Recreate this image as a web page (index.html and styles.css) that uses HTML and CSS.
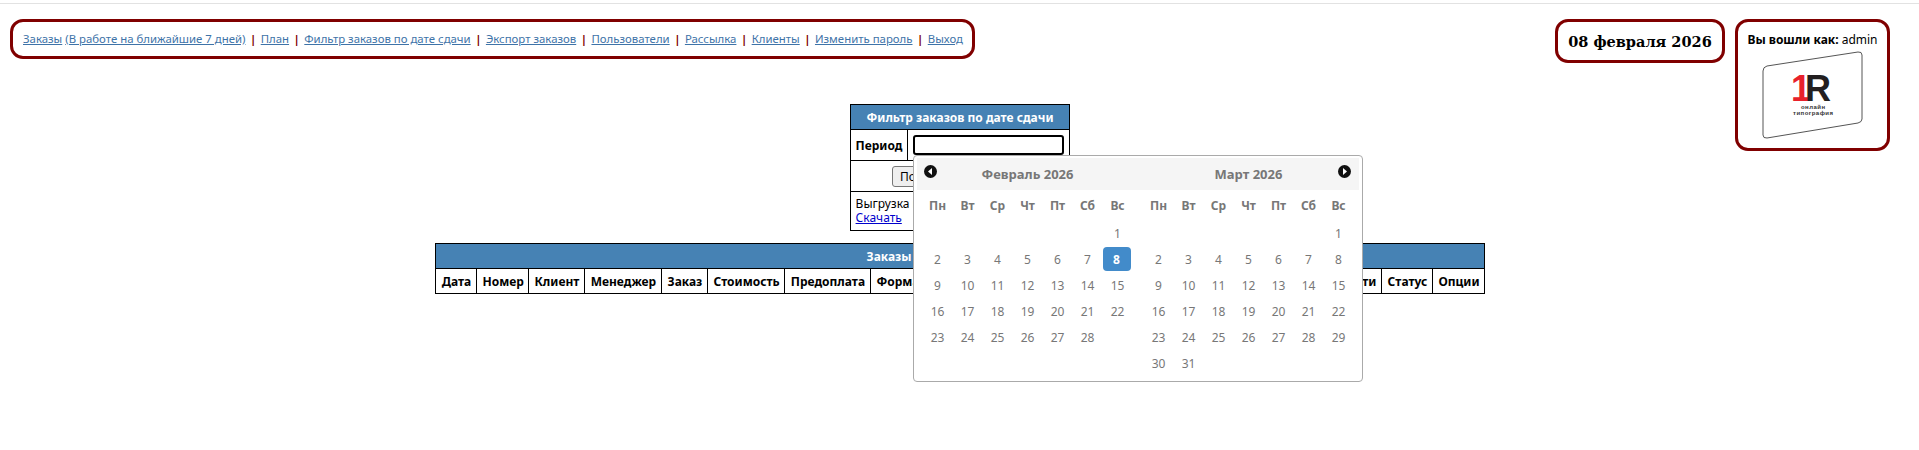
FILE: index.html
```html
<html>

<head>
  <title>Фильтр заказов по дате сдачи</title>
  <link rel="stylesheet" href="styles.css">
</head>

<body>
  <header class="top-bar">
    <nav class="main-menu">
      <a href="#">Заказы</a> <a href="#">(В работе на ближайшие 7 дней)</a>
      <span class="sep">|</span> <a href="#">План</a>
      <span class="sep">|</span> <a href="#">Фильтр заказов по дате сдачи</a>
      <span class="sep">|</span> <a href="#">Экспорт заказов</a>
      <span class="sep">|</span> <a href="#">Пользователи</a>
      <span class="sep">|</span> <a href="#">Рассылка</a>
      <span class="sep">|</span> <a href="#">Клиенты</a>
      <span class="sep">|</span> <a href="#">Изменить пароль</a>
      <span class="sep">|</span> <a href="#">Выход</a>
    </nav>
    <div class="today">08 февраля 2026</div>
    <div class="login-box">
      <div class="login-name"><b>Вы вошли как:</b> admin</div>
      <svg class="logo" width="102" height="90" viewBox="0 0 102 90">
        <path d="M1 20 Q1 16 5 15 L96 1 Q100 0.500 100 4 L100 68 Q100 71 96 72 L5 87 Q1 87.500 1 84 Z" fill="#fff" stroke="#555" stroke-width="1" />
        <text class="logo-one" x="29" y="50">1</text>
        <text class="logo-r" x="43" y="50">R</text>
        <text class="logo-small" x="51" y="58" textLength="24">онлайн</text>
        <text class="logo-small" x="51" y="64" textLength="40">типография</text>
      </svg>
    </div>
  </header>

  <main class="content">
    <table class="grid filter-table">
      <tr>
        <th colspan="2" class="grid-title">Фильтр заказов по дате сдачи</th>
      </tr>
      <tr class="period-row">
        <td class="period-label"><b>Период</b></td>
        <td><input type="text" class="period-input" /></td>
      </tr>
      <tr class="button-row">
        <td colspan="2"><button class="show-button">Показать заказы</button></td>
      </tr>
      <tr class="export-row">
        <td colspan="2">Выгрузка по фильтру<br><a href="#" class="download">Скачать</a></td>
      </tr>
    </table>

    <table class="grid orders-table">
      <colgroup>
        <col class="col-41">
        <col class="col-52">
        <col class="col-56">
        <col class="col-77">
        <col class="col-46">
        <col class="col-77">
        <col class="col-86">
        <col class="col-90">
        <col class="col-90">
        <col class="col-331">
        <col class="col-51">
        <col class="col-51">
      </colgroup>
      <tr>
        <th colspan="12" class="grid-title">Заказы за выбранный период</th>
      </tr>
      <tr class="orders-head">
        <th>Дата</th>
        <th>Номер</th>
        <th>Клиент</th>
        <th>Менеджер</th>
        <th>Заказ</th>
        <th>Стоимость</th>
        <th>Предоплата</th>
        <th class="form-col">Форма</th>
        <th>Дата сдачи</th>
        <th class="details-col">Подробности</th>
        <th>Статус</th>
        <th>Опции</th>
      </tr>
    </table>
  </main>

  <div class="datepicker">
    <div class="month">
      <div class="month-title">
        <svg class="month-arrow prev" width="13" height="13" viewBox="0 0 13 13">
          <circle cx="6.500" cy="6.500" r="6.500" fill="#111" />
          <path d="M8 3 L4 6.500 L8 10 Z" fill="#fff" />
        </svg>
        Февраль 2026
      </div>
      <div class="days">
        <b>Пн</b><b>Вт</b><b>Ср</b><b>Чт</b><b>Пт</b><b>Сб</b><b>Вс</b>
        <i></i><i></i><i></i><i></i><i></i><i></i><span>1</span>
        <span>2</span><span>3</span><span>4</span><span>5</span><span>6</span><span>7</span><span class="selected">8</span>
        <span>9</span><span>10</span><span>11</span><span>12</span><span>13</span><span>14</span><span>15</span>
        <span>16</span><span>17</span><span>18</span><span>19</span><span>20</span><span>21</span><span>22</span>
        <span>23</span><span>24</span><span>25</span><span>26</span><span>27</span><span>28</span><i></i>
      </div>
    </div>
    <div class="month">
      <div class="month-title">
        Март 2026
        <svg class="month-arrow next" width="13" height="13" viewBox="0 0 13 13">
          <circle cx="6.500" cy="6.500" r="6.500" fill="#111" />
          <path d="M5 3 L9 6.500 L5 10 Z" fill="#fff" />
        </svg>
      </div>
      <div class="days">
        <b>Пн</b><b>Вт</b><b>Ср</b><b>Чт</b><b>Пт</b><b>Сб</b><b>Вс</b>
        <i></i><i></i><i></i><i></i><i></i><i></i><span>1</span>
        <span>2</span><span>3</span><span>4</span><span>5</span><span>6</span><span>7</span><span>8</span>
        <span>9</span><span>10</span><span>11</span><span>12</span><span>13</span><span>14</span><span>15</span>
        <span>16</span><span>17</span><span>18</span><span>19</span><span>20</span><span>21</span><span>22</span>
        <span>23</span><span>24</span><span>25</span><span>26</span><span>27</span><span>28</span><span>29</span>
        <span>30</span><span>31</span>
      </div>
    </div>
  </div>
</body>

</html>
```

FILE: styles.css
```css
:root {
  --frame: #800000;
  --title: #4682b4;
  --link: #3e73a8;
  --muted: #777;
}

body {
  margin: 0;
  border-top: 1px solid #e2e2e2;
  margin-top: 3px;
  background-color: #fff;
  color: #000;
  font-family: "Noto Sans", Tahoma, sans-serif;
  font-size: 12px;
}

table {
  font-size: 12px;
}

.top-bar {
  display: flex;
  align-items: flex-start;
  padding: 15px 29px 0 10px;
}

.main-menu {
  border: 3px solid var(--frame);
  border-radius: 13px;
  box-sizing: border-box;
  height: 40px;
  line-height: 34px;
  padding: 0 9px 0 10px;
  font-size: 11.400px;
  white-space: nowrap;
  margin-right: auto;
}

.main-menu a {
  color: var(--link);
}

.sep {
  color: var(--frame);
  font-weight: bold;
  margin: 0 1.500px;
}

.today {
  border: 3px solid var(--frame);
  border-radius: 13px;
  box-sizing: border-box;
  width: 170px;
  height: 44px;
  line-height: 40px;
  text-align: center;
  font-family: "DejaVu Serif", serif;
  font-size: 14.500px;
  font-weight: bold;
}

.login-box {
  border: 3px solid var(--frame);
  border-radius: 13px;
  box-sizing: border-box;
  width: 155px;
  height: 132px;
  margin-left: 10px;
  text-align: center;
}

.login-name {
  margin-top: 9px;
  height: 20px;
  white-space: nowrap;
}

.logo {
  display: block;
  margin: 0 0 0 24px;
}

.logo-one {
  fill: #e8212b;
  font-family: "Liberation Sans", sans-serif;
  font-size: 36px;
  font-weight: bold;
}

.logo-r {
  fill: #231f20;
  font-family: "Liberation Sans", sans-serif;
  font-size: 36px;
  font-weight: bold;
}

.logo-small {
  fill: #333;
  font-family: "Liberation Sans", sans-serif;
  font-size: 6px;
  font-weight: bold;
  text-anchor: middle;
}

.content {
  display: flex;
  flex-direction: column;
  align-items: center;
  padding-left: 1px;
  margin-top: -47px;
  gap: 12px;
}

.grid {
  border-collapse: collapse;
  border: 1px solid #000;
}

.grid td,
.grid th {
  border: 1px solid #000;
  padding: 0 5px;
}

.grid-title {
  background-color: var(--title);
  color: #fff;
  height: 25px;
  text-align: center;
}

.filter-table {
  width: 220px;
}

.period-row {
  height: 31px;
}

.period-label {
  width: 47px;
}

.period-input {
  display: block;
  box-sizing: border-box;
  width: 151px;
  height: 20px;
  border: 2px solid #000;
  border-radius: 3px;
  padding: 0;
}

.button-row {
  height: 31px;
  text-align: center;
}

.show-button {
  width: 136px;
  height: 21px;
  padding: 0 0 0 7px;
  font-family: inherit;
  font-size: 12px;
  text-align: left;
  border: 1px solid #777;
  border-radius: 3px;
  background-color: #efefef;
}

.export-row td {
  height: 39px;
  line-height: 14px;
}

.download {
  color: #0000cc;
}

.orders-table {
  width: 1048px;
  table-layout: fixed;
}

.orders-head th {
  height: 25px;
  white-space: nowrap;
}

.grid .form-col {
  text-align: left;
}

.details-col {
  text-align: right;
}

.col-41 { width: 41px; }
.col-46 { width: 46px; }
.col-51 { width: 51px; }
.col-52 { width: 52px; }
.col-56 { width: 56px; }
.col-77 { width: 77px; }
.col-86 { width: 86px; }
.col-90 { width: 90px; }
.col-331 { width: 331px; }

.datepicker {
  position: absolute;
  left: 913px;
  top: 155px;
  display: flex;
  box-sizing: border-box;
  width: 450px;
  height: 227px;
  padding: 2px 3px;
  background-color: #fff;
  border: 1px solid #aaa;
  border-radius: 4px;
  color: var(--muted);
}

.month {
  flex: 1;
}

.month-title {
  position: relative;
  height: 32px;
  line-height: 32px;
  background-color: #f5f5f5;
  text-align: center;
  font-size: 13px;
  font-weight: bold;
}

.month-arrow {
  position: absolute;
  top: 7px;
}

.month-arrow.prev {
  left: 7px;
}

.month-arrow.next {
  right: 8px;
}

.days {
  display: grid;
  grid-template-columns: repeat(7, 30px);
  grid-template-rows: 29px;
  grid-auto-rows: 26px;
  justify-content: center;
  margin-top: 1px;
}

.days b,
.days span {
  display: flex;
  align-items: center;
  justify-content: center;
  font-style: normal;
}

.days .selected {
  margin: 1px 2px 1px 0;
  background-color: #428bca;
  border-radius: 4px;
  color: #fff;
  font-weight: bold;
}
```
